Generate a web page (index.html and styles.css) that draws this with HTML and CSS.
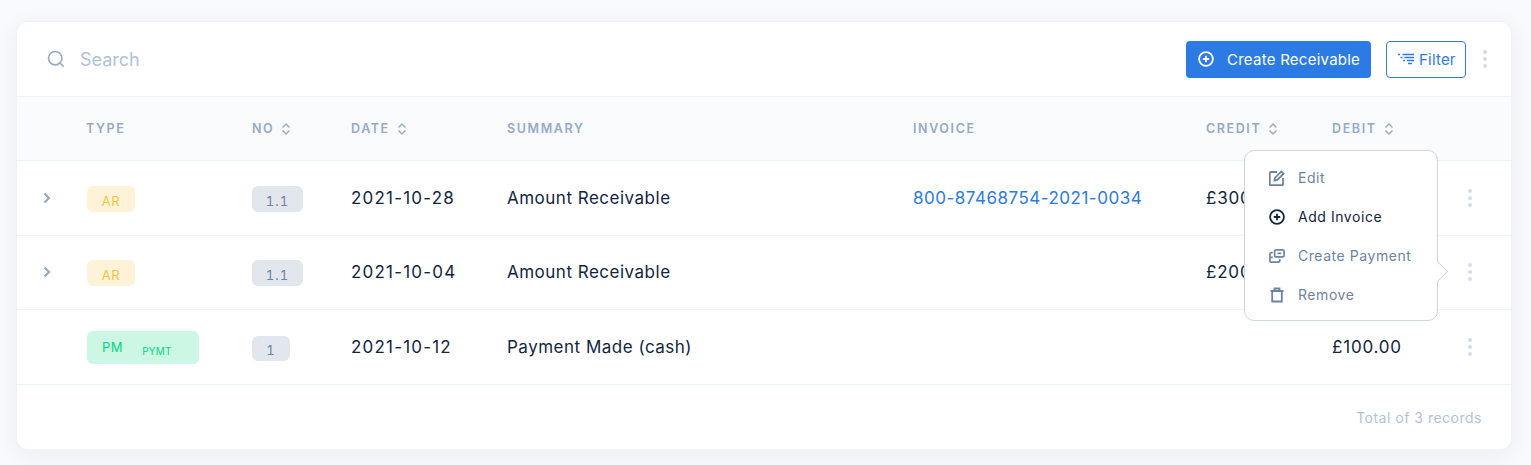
FILE: index.html
```html
<!DOCTYPE html>
<html lang="en">
<head>
<meta charset="utf-8">
<title>Receivables</title>
<link rel="stylesheet" href="styles.css">
</head>
<body>
<main class="card">
  <header class="toolbar">
    <div class="search">
      <svg class="search-icon" viewBox="0 0 18 18" width="18" height="18"><circle cx="8.2" cy="8.2" r="6.7"/><path d="M13 13l3.6 3.6"/></svg>
      <span>Search</span>
    </div>
    <button class="btn-primary">
      <svg viewBox="0 0 16 16" width="16" height="16"><circle cx="8" cy="8" r="6.900"/><path d="M8 4.800v6.400M4.800 8h6.400"/></svg>
      <span>Create Receivable</span>
    </button>
    <button class="btn-outline">
      <svg viewBox="0 0 16 12" width="16" height="12"><path d="M4.500 1.500H16M6.500 4.500H16M9 7.500h7M0 1.500h2M2.500 4.500h2M5 7.500h2M10 10.500h4"/></svg>
      <span>Filter</span>
    </button>
    <span class="dots"><i></i><i></i><i></i></span>
  </header>

  <div class="row head">
    <span></span>
    <span class="th">TYPE</span>
    <span class="th">NO <svg class="sort" viewBox="0 0 10 12" width="10" height="12"><path d="M1.500 4.500L5 1l3.500 3.500M1.500 7.500L5 11l3.500-3.500"/></svg></span>
    <span class="th">DATE <svg class="sort" viewBox="0 0 10 12" width="10" height="12"><path d="M1.500 4.500L5 1l3.500 3.500M1.500 7.500L5 11l3.500-3.500"/></svg></span>
    <span class="th">SUMMARY</span>
    <span class="th">INVOICE</span>
    <span class="th">CREDIT <svg class="sort" viewBox="0 0 10 12" width="10" height="12"><path d="M1.500 4.500L5 1l3.500 3.500M1.500 7.500L5 11l3.500-3.500"/></svg></span>
    <span class="th">DEBIT <svg class="sort" viewBox="0 0 10 12" width="10" height="12"><path d="M1.500 4.500L5 1l3.500 3.500M1.500 7.500L5 11l3.500-3.500"/></svg></span>
    <span></span>
  </div>

  <div class="row">
    <svg class="chev" viewBox="0 0 8 12" width="8" height="12"><path d="M1.500 1.500L6 6l-4.500 4.500"/></svg>
    <span><b class="badge ar">AR</b></span>
    <span><b class="badge no">1.1</b></span>
    <span class="date">2021-10-28</span>
    <span>Amount Receivable</span>
    <a class="link" href="#">800-87468754-2021-0034</a>
    <span class="money">£300.00</span>
    <span></span>
    <span class="dots"><i></i><i></i><i></i></span>
  </div>
  <div class="row">
    <svg class="chev" viewBox="0 0 8 12" width="8" height="12"><path d="M1.500 1.500L6 6l-4.500 4.500"/></svg>
    <span><b class="badge ar">AR</b></span>
    <span><b class="badge no">1.1</b></span>
    <span class="date">2021-10-04</span>
    <span>Amount Receivable</span>
    <span></span>
    <span class="money">£200.00</span>
    <span></span>
    <span class="dots"><i></i><i></i><i></i></span>
  </div>
  <div class="row">
    <span></span>
    <span><b class="badge pm">PM <small>PYMT</small></b></span>
    <span><b class="badge no one">1</b></span>
    <span class="date">2021-10-12</span>
    <span>Payment Made (cash)</span>
    <span></span>
    <span></span>
    <span class="money">£100.00</span>
    <span class="dots"><i></i><i></i><i></i></span>
  </div>

  <footer class="foot">Total of 3 records</footer>
</main>

<div class="menu">
  <div class="item">
    <svg viewBox="0 0 16 16" width="16" height="16"><path d="M8 2H1.800a1 1 0 0 0-1 1v11.200a1 1 0 0 0 1 1H13a1 1 0 0 0 1-1V8"/><path d="M5.500 10.500l.6-2.900 6.200-6.200 2.300 2.300-6.200 6.200z"/></svg>
    <span>Edit</span>
  </div>
  <div class="item active">
    <svg viewBox="0 0 16 16" width="16" height="16"><circle cx="8" cy="8" r="6.900"/><path d="M8 4.800v6.400M4.800 8h6.400"/></svg>
    <span>Add Invoice</span>
  </div>
  <div class="item">
    <svg viewBox="0 0 17 16" width="16" height="16"><rect x="6" y="1.500" width="10" height="7.500" rx="1.500"/><path d="M9 5.200h4"/><path d="M4 4.500H2.500a1.500 1.500 0 0 0-1.500 1.500v7.500a1 1 0 0 0 1 1h8a1.500 1.500 0 0 0 1.500-1.500V11.500M1 9.500h3"/></svg>
    <span>Create Payment</span>
  </div>
  <div class="item">
    <svg viewBox="0 0 16 16" width="16" height="16"><path d="M1.500 4h13M5.500 4V1.500h5V4M3.200 4v10.500h9.600V4"/></svg>
    <span>Remove</span>
  </div>
  <span class="arrow"></span>
</div>
</body>
</html>
```
FILE: styles.css
```css
* { box-sizing: border-box; }
html, body { height: 100%; }
body {
  margin: 0;
  padding: 21px 19px 0 16px;
  background: #f8f9fc;
  font-family: "Inter", "Noto Sans", sans-serif;
  font-size: 17px;
  letter-spacing: .5px;
  color: #12263f;
  overflow: hidden;
}
.card {
  background: #fff;
  border: 1px solid #edf2f9;
  border-bottom-color: #f1f4f8;
  border-radius: 12px;
  height: 429px;
  overflow: hidden;
  box-shadow: 0 6px 24px rgba(18, 38, 63, .05);
}
.toolbar {
  height: 75px;
  display: flex;
  align-items: center;
  padding: 0 24px 0 30px;
  border-bottom: 1px solid #edf2f9;
}
.search {
  display: flex;
  align-items: center;
  gap: 15px;
  flex: 1;
  color: #b1c2d9;
  font-size: 18px;
  letter-spacing: 0;
}
.search-icon { fill: none; stroke: #95aac9; stroke-width: 1.600; }
button { font: inherit; letter-spacing: inherit; cursor: pointer; white-space: nowrap; }
.btn-primary {
  display: flex;
  align-items: center;
  gap: 13px;
  height: 37px;
  width: 185px;
  padding: 0 12px;
  background: #2c7be5;
  border: 0;
  border-radius: 4px;
  color: #fff;
  font-size: 15px;
  letter-spacing: .25px;
}
.btn-primary svg { fill: none; stroke: #fff; stroke-width: 1.800; flex: none; }
.btn-outline {
  display: flex;
  align-items: center;
  gap: 5px;
  height: 37px;
  width: 80px;
  margin-left: 15px;
  padding: 0 11px;
  background: #fff;
  border: 1px solid #2c7be5;
  border-radius: 4px;
  color: #2c7be5;
  font-size: 15px;
  letter-spacing: .2px;
}
.btn-outline svg { fill: none; stroke: #2c7be5; stroke-width: 1.500; flex: none; }
.dots { display: flex; flex-direction: column; align-items: center; gap: 3px; width: 5px; }
.dots i { width: 4px; height: 4px; border-radius: 50%; background: #d2ddec; }
.toolbar .dots { margin-left: 16px; }
.row {
  display: grid;
  grid-template-columns: 69px 166px 99px 156px 406px 293px 126px 135px 1fr;
  align-items: center;
  height: 74.500px;
  border-bottom: 1px solid #edf2f9;
}
.row > :first-child { margin-left: 26px; }
.date { letter-spacing: 1.200px; }
.money { letter-spacing: .8px; }
.head { height: 64px; background: #f9fbfd; }
.th {
  display: flex;
  align-items: center;
  gap: 7px;
  color: #95aac9;
  font-size: 12.500px;
  font-weight: 600;
  letter-spacing: 1.600px;
}
.sort { fill: none; stroke: #95aac9; stroke-width: 1.400; }
.chev { fill: none; stroke: #95aac9; stroke-width: 2.200; }
.badge {
  display: inline-block;
  font-weight: 400;
  border-radius: 6px;
  font-size: 13px;
  text-align: center;
  position: relative;
  top: 1px;
}
.ar { width: 48px; height: 26px; line-height: 30px; margin-left: 1px; background: #fef3d9; color: #f6c343; }
.no { width: 51px; height: 26px; line-height: 30px; background: #e2e6ed; color: #6e84a3; font-feature-settings: "tnum"; letter-spacing: 1px; }
.no.one { width: 38px; height: 25px; line-height: 29px; top: 2px; }
.pm { width: 112px; height: 33px; line-height: 33px; margin-left: 1px; padding-left: 15px; background: #ccf7e5; color: #00d97e; text-align: left; }
.pm small { font-size: 10px; margin-left: 15px; position: relative; top: 3px; letter-spacing: .2px; }
.link { color: #2c7be5; text-decoration: none; }
.foot {
  height: 66px;
  display: flex;
  align-items: center;
  justify-content: flex-end;
  padding-right: 29px;
  color: #b1c2d9;
  font-size: 14px;
}
.menu {
  position: absolute;
  left: 1244px;
  top: 150px;
  width: 194px;
  height: 171px;
  padding: 7px 0;
  background: #fff;
  border: 1px solid #cfd5dd;
  border-radius: 10px;
  font-size: 14px;
  letter-spacing: .55px;
}
.item {
  display: flex;
  align-items: center;
  gap: 13px;
  height: 39px;
  padding-left: 24px;
  color: #6e84a3;
}
.item svg { fill: none; stroke: #6e84a3; stroke-width: 1.800; flex: none; }
.item.active { color: #12263f; }
.item.active svg { stroke: #12263f; }
.arrow {
  position: absolute;
  right: -8px;
  top: 113px;
  width: 15px;
  height: 15px;
  background: #fff;
  border-top: 1px solid #cfd5dd;
  border-right: 1px solid #cfd5dd;
  transform: rotate(45deg);
}
```
